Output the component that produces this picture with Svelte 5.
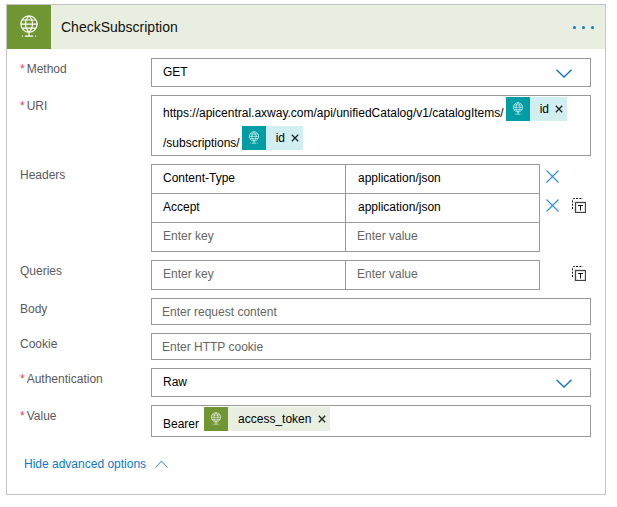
<script>
  const globe = 'M12 2.500a7 7 0 1 0 0 14 7 7 0 0 0 0-14Z M12 2.500c-4 4-4 10 0 14 M12 2.500c4 4 4 10 0 14 M5 9.500h14 M6 6h12 M6 13h12 M12 16.500v3 M8.500 19.800h7 M6 19.800h.8 M17.200 19.800h.8';
</script>

{#snippet icon(size, weight)}
  <svg width={size} height={size} viewBox="0 0 24 24" fill="none" stroke="#fff" stroke-width={weight}><path d={globe} /></svg>
{/snippet}

{#snippet token(name, cls)}
  <span class="token {cls}">
    <span class="tile">{@render icon(16, 0.9)}</span>
    <span class="tname">{name}</span>
    <svg class="rm" width="8" height="8" viewBox="0 0 8 8" stroke="#222" stroke-width="1.3"><path d="M.8.8l6.400 6.400M7.200.8L.8 7.200" /></svg>
  </span>
{/snippet}

{#snippet chevron()}
  <svg class="chev" width="16" height="9" viewBox="0 0 16 9" fill="none" stroke="#0f6fd6" stroke-width="1.3"><path d="M.5.8L8 8l7.500-7.200" /></svg>
{/snippet}

{#snippet cross()}
  <svg width="13" height="13" viewBox="0 0 13 13" stroke="#2a8ee8" stroke-width="1.100"><path d="M.5.5l12 12M12.500.5l-12 12" /></svg>
{/snippet}

{#snippet copy()}
  <svg class="copy" width="14" height="15" viewBox="0 0 14 15" fill="none" stroke="#111">
    <path d="M.5 11V2a1.500 1.500 0 0 1 1.500-1.500h9" stroke-dasharray="2 1.300" />
    <rect x="3.500" y="4.500" width="10" height="10" fill="#fff" stroke="#444" stroke-width="1.300" />
    <path d="M6 7.500h5M8.500 7.500v5" />
  </svg>
{/snippet}

<div class="card">
  <header>
    <div class="logo">{@render icon(28, 1)}</div>
    <h1>CheckSubscription</h1>
    <div class="dots"><i></i><i></i><i></i></div>
  </header>

  <div class="form">
    <div class="row">
      <div class="label"><b>*</b>Method</div>
      <div class="field select h29"><span>GET</span>{@render chevron()}</div>
    </div>

    <div class="row">
      <div class="label"><b>*</b>URI</div>
      <div class="field uri">
        <div class="line">
          <span class="tx">https://apicentral.axway.com/api/unifiedCatalog/v1/catalogItems/</span>
          {@render token('id', 'teal')}
        </div>
        <div class="line second">
          <span class="tx">/subscriptions/</span>
          {@render token('id', 'teal')}
        </div>
      </div>
    </div>

    <div class="row">
      <div class="label">Headers</div>
      <div class="kvwrap">
        <div class="kv">
          <div class="cell">Content-Type</div><div class="cell filled">application/json</div>
          <div class="cell">Accept</div><div class="cell filled">application/json</div>
          <div class="cell ph">Enter key</div><div class="cell ph">Enter value</div>
        </div>
        <div class="acts">
          <div class="act">{@render cross()}</div>
          <div class="act">{@render cross()}{@render copy()}</div>
        </div>
      </div>
    </div>

    <div class="row">
      <div class="label">Queries</div>
      <div class="kvwrap">
        <div class="kv">
          <div class="cell ph">Enter key</div><div class="cell ph">Enter value</div>
        </div>
        <div class="acts">
          <div class="act q">{@render copy()}</div>
        </div>
      </div>
    </div>

    <div class="row">
      <div class="label">Body</div>
      <div class="field ph h27">Enter request content</div>
    </div>

    <div class="row">
      <div class="label">Cookie</div>
      <div class="field ph h27">Enter HTTP cookie</div>
    </div>

    <div class="row">
      <div class="label"><b>*</b>Authentication</div>
      <div class="field select h29"><span>Raw</span>{@render chevron()}</div>
    </div>

    <div class="row">
      <div class="label"><b>*</b>Value</div>
      <div class="field value">
        <span class="tx">Bearer</span>
        {@render token('access_token', 'green')}
      </div>
    </div>
  </div>

  <div class="adv">
    <span>Hide advanced options</span>
    <svg width="13" height="8" viewBox="0 0 13 8" fill="none" stroke="#2a8ee8" stroke-width="1"><path d="M.5 7.500L6.500 1l6 6.500" /></svg>
  </div>
</div>

<style>
  :global(body) {
    margin: 0;
    background: #fff;
    font-family: "Liberation Sans", Arial, sans-serif;
    font-size: 12px;
    color: #000;
  }
  .card {
    box-sizing: border-box;
    width: 600px;
    height: 491px;
    margin: 4px 0 0 6px;
    border: 1px solid #c4c4c4;
  }
  header {
    display: flex;
    align-items: center;
    height: 44px;
    background: #e8eee0;
  }
  .logo {
    width: 44px;
    height: 44px;
    background: #6f9632;
    display: flex;
    align-items: center;
    justify-content: center;
  }
  h1 {
    margin: 0 0 0 10px;
    font-size: 14px;
    font-weight: 400;
    color: #111;
    flex: 1;
  }
  .dots {
    display: flex;
    gap: 6px;
    margin-right: 11px;
  }
  .dots i {
    width: 3px;
    height: 3px;
    border-radius: 50%;
    background: #0a78d4;
  }
  .form {
    display: flex;
    flex-direction: column;
    gap: 8px;
    padding: 9px 14px 0 13px;
  }
  .row {
    display: grid;
    grid-template-columns: 131px 1fr;
  }
  .label {
    color: #59595f;
    padding-top: 4px;
    line-height: 15px;
  }
  .label b {
    color: #e8434f;
    font-weight: 400;
    margin-right: 2px;
  }
  .field {
    box-sizing: border-box;
    border: 1px solid #999;
    width: 440px;
    padding-left: 11px;
    display: flex;
    align-items: center;
  }
  .h29 { height: 29px; }
  .h27 { height: 27px; padding-left: 10px; }
  .select {
    justify-content: space-between;
    padding-right: 18px;
  }
  .select span { margin-bottom: 2px; }
  .chev { margin-top: 2px; }
  .ph { color: #666; }
  .uri {
    height: 61px;
    display: flex;
    flex-direction: column;
    gap: 5px;
    padding-top: 1px;
    align-items: flex-start;
  }
  .line {
    display: flex;
    align-items: flex-start;
    height: 24px;
  }
  .line .tx { margin: 9px 2px 0 0; line-height: 14px; }
  .line.second .tx { margin-top: 10px; }
  .token {
    display: inline-flex;
    align-items: center;
    height: 24px;
  }
  .tile {
    width: 24px;
    height: 24px;
    display: flex;
    align-items: center;
    justify-content: center;
  }
  .tname { margin: 0 6px 0 10px; }
  .rm { margin-right: 4px; }
  .teal { background: #d1eff1; }
  .teal .tile { background: #009da5; }
  .green { background: #e8eee0; }
  .green .tile { background: #6f9632; }
  .green .tname { margin-right: 7px; }
  .kvwrap {
    display: flex;
  }
  .kv {
    box-sizing: border-box;
    width: 389px;
    border: 1px solid #999;
    display: grid;
    grid-template-columns: 193px 1fr;
  }
  .cell {
    box-sizing: border-box;
    height: 29px;
    padding: 0 0 2px 11px;
    display: flex;
    align-items: center;
    border-top: 1px solid #999;
  }
  .cell:nth-child(-n+2) { border-top: 0; height: 28px; }
  .cell:nth-child(even) { border-left: 1px solid #999; }
  .cell.filled { padding-left: 12px; }
  .acts {
    padding-left: 6px;
    display: flex;
    flex-direction: column;
    gap: 5px;
  }
  .act {
    height: 24px;
    display: flex;
    align-items: center;
    gap: 13px;
  }
  .act.q { height: 26px; padding-left: 26px; }
  .value {
    height: 32px;
    align-items: flex-start;
  }
  .value .tx { margin: 11px 5px 0 0; line-height: 14px; }
  .value .token { margin-top: 1px; }
  .adv {
    display: flex;
    align-items: center;
    gap: 9px;
    margin: 20px 0 0 17px;
    color: #0a78d4;
  }
</style>
